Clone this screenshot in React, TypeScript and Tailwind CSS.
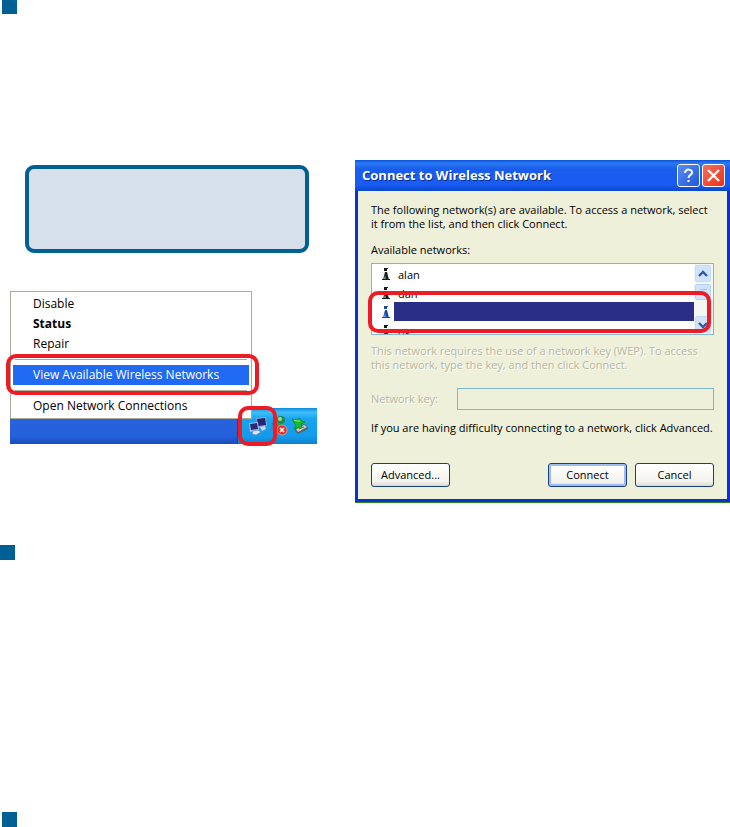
import { ReactNode } from "react";

interface SectionProps {
  className?: string;
}

const SectionMarker = ({ className }: SectionProps) => (
  <section className={className}>
    <div className="size-[15px] bg-[#006094]" />
  </section>
);

const Highlight = ({ className }: { className: string }) => (
  <span
    className={`pointer-events-none absolute z-20 rounded-[10px] border-4 border-[#ed1c24] ${className}`}
  />
);

const MenuItem = ({ children }: { children: ReactNode }) => (
  <li>
    <button className="block h-5 w-full px-5 text-left leading-5">{children}</button>
  </li>
);

const Separator = () => <li className="mx-[2px] my-[5px] h-px bg-[#a9ac97]" />;

const ConnectionIcon = () => (
  <svg className="h-[18px] w-[19px]" viewBox="0 0 19 18">
    <path d="M8 1l10-1 1 9-9 2z" fill="#8fa3e0" />
    <path d="M9 2l8-1 1 7-8 1z" fill="#25246e" />
    <path d="M12 10l5-1 1 3-4 2z" fill="#c9d3f3" />
    <path d="M1 6l9-1 1 8-9 2z" fill="#a7b9ee" />
    <path d="M2 7l7-1 1 6-7 1z" fill="#2a2a78" />
    <path d="M5 14l5-1 3 2-5 3-4-1z" fill="#dce4f8" stroke="#6478b8" strokeWidth=".6" />
  </svg>
);

const OfflineIcon = () => (
  <svg className="h-[20px] w-[18px]" viewBox="0 0 18 20">
    <circle cx="11" cy="4" r="4" fill="#1e8a50" />
    <circle cx="10" cy="3" r="2" fill="#9fe08a" />
    <path d="M5 14c0-5 3-7 7-6 3 1 4 3 4 6z" fill="#2a9a4c" />
    <circle cx="4" cy="8" r="2" fill="#3468b4" />
    <path d="M0 15c0-3 2-5 4-5s3 2 3 5z" fill="#4682c4" />
    <circle cx="12" cy="14" r="5" fill="#e03328" stroke="#f7b0a4" strokeWidth=".7" />
    <path d="M10 12l4 4m0-4l-4 4" stroke="#fff" strokeWidth="1.5" />
  </svg>
);

const RemoveHardwareIcon = () => (
  <svg className="h-[18px] w-[18px]" viewBox="0 0 18 18">
    <path d="M4 12l9-5 4 3v2l-10 5-3-3z" fill="#58645f" />
    <path d="M5 12l8-4 3 2-9 5z" fill="#cbd3cd" />
    <path d="M8 12l5-2" stroke="#53605a" />
    <path d="M1 2l5 1 2-2 3 3 3 1-4 2 1 3-8 2 2-3z" fill="#19ba25" stroke="#0d7e27" strokeWidth=".7" />
    <path d="M3 3l3 1 3 0" stroke="#8cf284" fill="none" />
  </svg>
);

const Antenna = ({ active }: { active?: boolean }) => (
  <svg className="h-[14px] w-[8px]" viewBox="0 0 8 14" fill={active ? "#1749a5" : "#161c1a"}>
    <path d="M2 1h3v3H2zM3 5h2l1 4 1 4H1l1-4z" />
    <path d="M3 8l-1 4h2z" fill={active ? "#6ba7f0" : "#87948d"} />
    <path d="M5 1h1v1H5zM0 12h2v1H0zM6 12h2v1H6z" />
  </svg>
);

const networks = [
  { name: "alan" },
  { name: "dan" },
  { name: "", active: true },
  { name: "ng" },
];

const ContextMenu = () => (
  <div className="relative mt-[38px] ml-[10px] h-[153px] w-[307px] font-['Open_Sans',sans-serif] text-[12px] text-black">
    <ul className="relative z-10 w-[242px] border border-[#a9ac97] bg-white p-[2px]">
      <MenuItem>Disable</MenuItem>
      <MenuItem>
        <b>Status</b>
      </MenuItem>
      <MenuItem>Repair</MenuItem>
      <Separator />
      <li className="relative bg-[#206af4] text-white">
        <button className="block h-5 w-full px-5 text-left leading-5">View Available Wireless Networks</button>
        <Highlight className="-left-[7px] -right-[10px] -top-[11px] -bottom-[10px]" />
      </li>
      <Separator />
      <MenuItem>Open Network Connections</MenuItem>
    </ul>
    <div className="absolute inset-x-0 bottom-0 flex h-9 items-end">
      <div className="h-[26px] w-[227px] bg-[linear-gradient(#2a62da,#2560dc_70%,#1c4cb8)]" />
      <div className="flex h-9 flex-1 items-center gap-[3px] border-l border-[#0d4ba0] bg-[linear-gradient(#0c8ade,#3dc0fa_12%,#18a4ee_30%,#129bea_80%,#0f7fd0)] pl-[10px]">
        <span className="relative">
          <ConnectionIcon />
          <Highlight className="-inset-x-[10px] -inset-y-[11px]" />
        </span>
        <OfflineIcon />
        <RemoveHardwareIcon />
      </div>
    </div>
  </div>
);

const NetworkList = () => (
  <div className="relative mt-[6px]">
    <div className="flex h-[72px] overflow-hidden border border-[#7fb9cc] bg-white">
      <ul role="listbox" aria-labelledby="networks-label" className="flex-1">
        {networks.map((network, i) => (
          <li
            key={i}
            role="option"
            aria-selected={!!network.active}
            className="flex h-[19px] items-center pl-[10px]"
          >
            <Antenna active={network.active} />
            <span className={`ml-1 h-[19px] flex-1 leading-[22px] ${network.active ? "bg-[#2b2e87]" : "pl-1"}`}>
              {network.name}
            </span>
          </li>
        ))}
      </ul>
      <div className="flex w-[19px] flex-col bg-[#f6f6f0] p-px pr-[2px]">
        <button aria-label="Scroll up" className="grid h-[17px] place-items-center rounded-[2px] border border-[#c3dcfa] bg-[#cfe3fd]">
          <svg className="h-2 w-[10px]" viewBox="0 0 10 8" fill="none" stroke="#34599c" strokeWidth="2.4">
            <path d="M1 6l4-4 4 4" />
          </svg>
        </button>
        <div className="mt-[2px] grid h-4 place-items-center rounded-[2px] border border-[#b4d4f8] bg-[#cfe3fd]">
          <div className="h-[6px] w-[7px] border-y border-[#a3c6f2]" />
        </div>
        <button aria-label="Scroll down" className="mt-auto grid h-[17px] place-items-center rounded-[2px] border border-[#c3dcfa] bg-[#cfe3fd]">
          <svg className="h-2 w-[10px]" viewBox="0 0 10 8" fill="none" stroke="#34599c" strokeWidth="2.4">
            <path d="M1 2l4 4 4-4" />
          </svg>
        </button>
      </div>
    </div>
    <Highlight className="-left-[3px] right-[3px] top-7 bottom-[2px]" />
  </div>
);

const DialogButton = ({ children, className }: { children: ReactNode; className?: string }) => (
  <button
    className={`h-6 w-[79px] rounded-[3px] border border-[#1b3f7c] bg-[linear-gradient(#fff,#f4f3ee_80%,#dcd8cc)] ${className ?? ""}`}
  >
    {children}
  </button>
);

const Dialog = () => (
  <div className="min-w-0 flex-1 self-start border-b border-[#2f8a1c] bg-[#0831d9] font-['Open_Sans',Arial,sans-serif] text-[11px] text-black">
    <div className="flex h-[31px] items-center gap-[2px] bg-[linear-gradient(#0a50d8,#2a7bf5_10%,#1a5cec_30%,#1a5cf4_80%,#0848c8)] pl-[7px] pr-[5px]">
      <h2 className="flex-1 text-[13px] font-bold text-white [text-shadow:1px_1px_#0a2e8c]">
        Connect to Wireless Network
      </h2>
      <button aria-label="Help" className="grid size-[23px] place-items-center rounded-[3px] border border-white bg-[linear-gradient(135deg,#5a8cf4,#2158d8)]">
        <svg className="size-[15px]" viewBox="0 0 15 15" fill="none" stroke="#fff" strokeWidth="2">
          <path d="M4 5c0-5 8-4 7 0-.4 2-3.500 2-3.500 5M7.500 12v2" />
        </svg>
      </button>
      <button aria-label="Close" className="grid size-[23px] place-items-center rounded-[3px] border border-white bg-[linear-gradient(135deg,#f4705a,#ec2f1c)]">
        <svg className="size-[13px]" viewBox="0 0 13 13" stroke="#fff" strokeWidth="2.4">
          <path d="M1 1l11 11M12 1L1 12" />
        </svg>
      </button>
    </div>
    <div className="mx-[3px] bg-[#eff0da] px-[13px] pt-3 pb-3 leading-[14px]">
      <p className="whitespace-nowrap">
        The following network(s) are available. To access a network, select
        <br />
        it from the list, and then click Connect.
      </p>
      <p id="networks-label" className="mt-3">
        Available networks:
      </p>
      <NetworkList />
      <div className="mt-[9px] text-[#b5b8a2] [text-shadow:1px_1px_#fff]">
        <p className="whitespace-nowrap">
          This network requires the use of a network key (WEP). To access
          <br />
          this network, type the key, and then click Connect.
        </p>
        <div className="mt-4 flex items-center">
          <label htmlFor="key" className="w-[86px]">
            Network key:
          </label>
          <input id="key" disabled className="h-[22px] min-w-0 flex-1 border border-[#7fb9cc] bg-[#eff0da] px-1" />
        </div>
      </div>
      <p className="mt-[11px] whitespace-nowrap">
        If you are having difficulty connecting to a network, click Advanced.
      </p>
      <div className="mt-7 flex gap-2">
        <DialogButton className="mr-auto">Advanced...</DialogButton>
        <DialogButton className="shadow-[inset_0_0_0_2px_#9dbdf3]">Connect</DialogButton>
        <DialogButton>Cancel</DialogButton>
      </div>
    </div>
    <div className="h-[3px]" />
  </div>
);

export default function App() {
  return (
    <main className="min-h-screen overflow-hidden bg-white">
      <SectionMarker className="-mt-px pl-[2px]" />
      <div className="mt-[146px] flex">
        <div className="w-[355px] shrink-0">
          <div className="mt-[5px] ml-[25px] h-[88px] w-[284px] rounded-[9px] border-4 border-[#006094] bg-[#d5e0eb]" />
          <ContextMenu />
        </div>
        <Dialog />
      </div>
      <SectionMarker className="mt-[42px]" />
      <SectionMarker className="mt-[252px] pl-[2px]" />
    </main>
  );
}
